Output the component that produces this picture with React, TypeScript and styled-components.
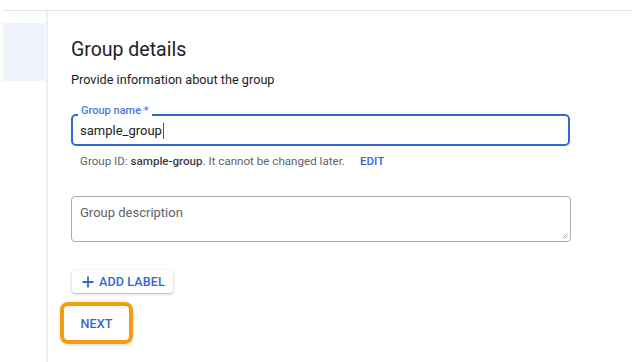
import React from "react";
import styled, { createGlobalStyle } from "styled-components";

const Global = createGlobalStyle`
  html, body { margin: 0; padding: 0; background: #ffffff; }
  body { font-family: Roboto, "Liberation Sans", Arial, sans-serif; color: #202124; }
  * { box-sizing: border-box; }
`;

const Page = styled.div`
  width: 632px;
  height: 362px;
  overflow: hidden;
  display: flex;
  flex-direction: column;
  padding-left: 3px;
`;

const TopBar = styled.div`
  height: 11px;
  flex: none;
  border-bottom: 1px solid #e3e3e3;
`;

const Body = styled.div`
  flex: 1;
  display: flex;
`;

const Sidebar = styled.div`
  width: 45px;
  flex: none;
  border-right: 2px solid #eeeeee;
  padding-top: 12px;
`;

const NavItem = styled.div`
  height: 58px;
  margin-right: 1px;
  background: #eef3fc;
`;

const Main = styled.div`
  flex: 1;
  padding-left: 23px;
  display: flex;
  flex-direction: column;
  align-items: flex-start;
`;

const Title = styled.h1`
  margin: 27px 0 0;
  font-size: 19.5px;
  line-height: 24px;
  font-weight: 400;
  color: #202124;
`;

const Subtitle = styled.p`
  margin: 10px 0 0;
  font-size: 12.7px;
  line-height: 16px;
  color: #202124;
`;

const Field = styled.div`
  position: relative;
  margin-top: 26px;
  width: 499px;
  height: 32px;
  border: 2px solid #3367d6;
  border-radius: 5px;
  display: flex;
  align-items: center;
  padding: 1px 7px 0;
`;

const FloatLabel = styled.span`
  position: absolute;
  left: 5px;
  top: -11px;
  padding: 0 3px;
  background: #ffffff;
  font-size: 11px;
  line-height: 12px;
  font-weight: 500;
  color: #4a7be0;
`;

const Value = styled.span`
  font-size: 13px;
  color: #202124;
`;

const Caret = styled.span`
  display: inline-block;
  width: 1px;
  height: 16px;
  background: #1a57d6;
  margin-left: 1px;
`;

const Helper = styled.div`
  margin: 8px 0 0 9px;
  font-size: 11.6px;
  line-height: 14px;
  color: #5f6368;
  display: flex;
  gap: 15px;
  b { font-weight: 500; color: #3c4043; }
`;

const LinkButton = styled.span`
  font-weight: 500;
  color: #3367d6;
`;

const TextArea = styled.div`
  position: relative;
  margin-top: 28px;
  width: 500px;
  height: 46px;
  border: 1px solid #a9adb2;
  border-radius: 4px;
  padding: 8px 8px 0;
  font-size: 13px;
  line-height: 16px;
  color: #5f6368;
`;

const Grip = styled.svg`
  position: absolute;
  right: 2px;
  bottom: 2px;
`;

const OutlineButton = styled.button`
  margin-top: 28px;
  margin-left: 1px;
  height: 23px;
  padding: 0 8px 0 10px;
  display: flex;
  align-items: center;
  gap: 5px;
  border: none;
  border-radius: 3px;
  background: #ffffff;
  box-shadow: 0 1px 3px rgba(60, 64, 67, 0.3), 0 1px 1px rgba(60, 64, 67, 0.12);
  font-family: Roboto, "Liberation Sans", Arial, sans-serif;
  font-size: 12.6px;
  font-weight: 500;
  color: #3367d6;
  letter-spacing: 0.1px;
`;

const Highlight = styled.div`
  margin: 9px 0 0 -11px;
  width: 73px;
  height: 42px;
  border: 4px solid #f59d0e;
  border-radius: 8px;
  box-shadow: 0 1px 3px rgba(0, 0, 0, 0.18);
  display: flex;
  align-items: center;
  justify-content: center;
`;

const FlatButton = styled.button`
  border: none;
  background: transparent;
  padding: 0;
  font-family: Roboto, "Liberation Sans", Arial, sans-serif;
  font-size: 12.6px;
  font-weight: 500;
  color: #3367d6;
  letter-spacing: 0.1px;
`;

export default function App() {
  return (
    <>
      <Global />
      <Page>
        <TopBar />
        <Body>
          <Sidebar>
            <NavItem />
          </Sidebar>
          <Main>
            <Title>Group details</Title>
            <Subtitle>Provide information about the group</Subtitle>
            <Field>
              <FloatLabel>Group name *</FloatLabel>
              <Value>sample_group</Value>
              <Caret />
            </Field>
            <Helper>
              <span>
                Group ID: <b>sample-group</b>. It cannot be changed later.
              </span>
              <LinkButton>EDIT</LinkButton>
            </Helper>
            <TextArea>
              Group description
              <Grip width="6" height="6" viewBox="0 0 6 6">
                <path d="M5.5 0.5 L0.5 5.5 M5.5 3 L3 5.5" stroke="#9aa0a6" strokeWidth="0.9" fill="none" />
              </Grip>
            </TextArea>
            <OutlineButton>
              <svg width="12" height="12" viewBox="0 0 12 12">
                <path d="M6 0.5 V11.5 M0.5 6 H11.5" stroke="#3367d6" strokeWidth="1.8" fill="none" />
              </svg>
              ADD LABEL
            </OutlineButton>
            <Highlight>
              <FlatButton>NEXT</FlatButton>
            </Highlight>
          </Main>
        </Body>
      </Page>
    </>
  );
}
